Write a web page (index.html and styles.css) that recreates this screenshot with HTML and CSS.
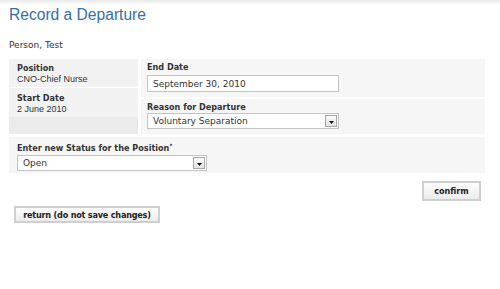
FILE: index.html
```html
<!DOCTYPE html>
<html lang="en">
<head>
    <meta charset="UTF-8">
    <title>Record a Departure</title>
    <link rel="stylesheet" href="styles.css">
</head>
<body>
    <div class="topShade"></div>
    <h1 class="pageTitle">Record a Departure</h1>
    <p class="personName">Person, Test</p>

    <div class="panel">
        <div class="panelTop">
            <div class="infoCol">
                <div class="infoCell">
                    <div class="infoLabel">Position</div>
                    <div class="infoValue">CNO-Chief Nurse</div>
                </div>
                <div class="infoCell startCell">
                    <div class="infoLabel">Start Date</div>
                    <div class="infoValue">2 June 2010</div>
                </div>
                <div class="infoFill"></div>
            </div>
            <div class="fieldCol">
                <div class="fieldCell dateCell">
                    <label class="fieldLabel" for="endDate">End Date</label>
                    <div class="textBox" id="endDate">September 30, 2010</div>
                </div>
                <div class="fieldCell reasonCell">
                    <label class="fieldLabel">Reason for Departure</label>
                    <div class="selectBox wide">
                        <span>Voluntary Separation</span>
                        <span class="dropBtn"><svg width="5" height="3" viewBox="0 0 5 3"><path d="M0 0h5L2.5 3z" fill="#111"/></svg></span>
                    </div>
                </div>
            </div>
        </div>
        <div class="statusRow">
            <label class="fieldLabel">Enter new Status for the Position<sup>*</sup></label>
            <div class="selectBox narrow">
                <span>Open</span>
                <span class="dropBtn"><svg width="5" height="3" viewBox="0 0 5 3"><path d="M0 0h5L2.5 3z" fill="#111"/></svg></span>
            </div>
        </div>
    </div>

    <div class="confirmRow">
        <button class="btn confirmBtn" type="button">confirm</button>
    </div>
    <div class="returnRow">
        <button class="btn returnBtn" type="button">return (do not save changes)</button>
    </div>
</body>
</html>
```

FILE: styles.css
```css
body {
    margin: 0;
    padding: 0 15px 0 9px;
    font-family: "DejaVu Sans", Verdana, sans-serif;
    font-size: 9px;
    color: #333;
    background: #fff;
}
.topShade {
    height: 5px;
    background: linear-gradient(#e9e9e9, #fff);
    margin: 0 -15px 0 -9px;
}
.pageTitle {
    font-family: "Liberation Sans", Arial, sans-serif;
    font-weight: normal;
    font-size: 15.6px;
    color: #3470a8;
    margin: 1px 0 0;
    line-height: 18px;
}
.personName {
    margin: 15px 0 0;
    line-height: 12px;
}
.panel {
    margin-top: 8px;
    display: flex;
    flex-direction: column;
    gap: 3px;
}
.panelTop {
    display: flex;
    gap: 3px;
}
.infoCol {
    width: 129px;
    display: flex;
    flex-direction: column;
}
.infoCell {
    background: #f2f2f2;
    padding: 3px 8px 0;
    height: 28px;
    box-sizing: border-box;
}
.startCell {
    margin-top: 1px;
    height: 29px;
    padding-top: 4px;
}
.infoFill {
    flex: 1;
    background: #ebebeb;
}
.infoLabel,
.fieldLabel {
    font-family: "DejaVu Sans Condensed", "DejaVu Sans", sans-serif;
    font-weight: bold;
}
.infoLabel {
    line-height: 12px;
}
.infoValue {
    font-family: "Liberation Sans", Arial, sans-serif;
    line-height: 11px;
}
.fieldCol {
    flex: 1;
    display: flex;
    flex-direction: column;
    gap: 2px;
}
.fieldCell {
    background: #f6f6f6;
    padding: 3px 6px 0;
    box-sizing: border-box;
}
.dateCell {
    height: 38px;
}
.reasonCell {
    height: 35px;
}
.fieldLabel {
    display: block;
    line-height: 11px;
    margin-bottom: 1px;
}
.dateCell .fieldLabel {
    margin-bottom: 2px;
}
.reasonCell .fieldLabel {
    margin-bottom: 0;
}
.fieldLabel sup {
    font-size: 6px;
    vertical-align: 3px;
}
.textBox {
    width: 192px;
    height: 17px;
    border: 1px solid #c4c4c4;
    background: #fff;
    padding: 0 5px;
    line-height: 17px;
    box-sizing: border-box;
}
.selectBox {
    height: 16px;
    border: 1px solid #c4c4c4;
    background: #fff;
    padding: 0 1px 0 5px;
    display: flex;
    align-items: center;
    justify-content: space-between;
    box-sizing: border-box;
}
.selectBox.wide {
    width: 192px;
}
.selectBox.narrow {
    width: 190px;
}
.dropBtn {
    width: 12px;
    height: 12px;
    border: 1px solid #a8a8a8;
    background: linear-gradient(#fafafa, #e4e4e4);
    display: flex;
    align-items: center;
    justify-content: center;
    box-sizing: border-box;
}
.dropBtn svg {
    margin-top: 2px;
}
.statusRow {
    background: #f6f6f6;
    padding: 3px 8px 0;
    height: 36px;
    box-sizing: border-box;
}
.confirmRow {
    display: flex;
    justify-content: flex-end;
    margin-top: 8px;
}
.returnRow {
    margin-top: 5px;
    padding-left: 5px;
}
.btn {
    font-family: "DejaVu Sans Condensed", "DejaVu Sans", Verdana, sans-serif;
    font-weight: bold;
    font-size: 9px;
    color: #222;
    background: linear-gradient(#fdfdfd, #ececec);
    border: 2px solid #cfcfcf;
    padding: 0;
    box-sizing: border-box;
    line-height: 12px;
}
.confirmBtn {
    width: 59px;
    height: 20px;
    margin-right: 4px;
}
.returnBtn {
    width: 146px;
    height: 17px;
    letter-spacing: -0.2px;
}
```
